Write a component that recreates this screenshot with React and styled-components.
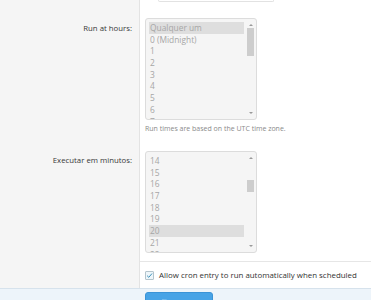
import React from 'react'
import styled, { createGlobalStyle } from 'styled-components'
import { Save } from 'lucide-react'

const ROW_H = 11.7

const hourOptions = ['Qualquer um', '0 (Midnight)', ...Array.from({ length: 23 }, (_, i) => String(i + 1))]
const minuteOptions = Array.from({ length: 60 }, (_, i) => String(i))

const GlobalStyle = createGlobalStyle`
  body {
    margin: 0;
    background: #fff;
    font-family: "Open Sans", "Noto Sans", sans-serif;
    color: #3c3c3c;
  }
`

function ListBox({ options, scrollIndex, selected }) {
	const visible = 8.5
	const trackH = 83
	const thumbH = Math.max(10, Math.round((visible / options.length) * trackH))
	const thumbTop = Math.round((scrollIndex / options.length) * trackH)
	const shown = options.slice(scrollIndex, scrollIndex + 9)

	return (
		<Box>
			<OptionList>
				{shown.map((opt) => (
					<Option key={opt} $selected={opt === selected}>
						{opt}
					</Option>
				))}
			</OptionList>
			<Scrollbar>
				<Arrow $up />
				<Track>
					<Thumb style={{ top: thumbTop, height: thumbH }} />
				</Track>
				<Arrow />
			</Scrollbar>
		</Box>
	)
}

export default function App() {
	return (
		<Page>
			<GlobalStyle />
			<Form>
				<Row>
					<Label />
					<Field $pad="0 0 8px">
						<PrevInput />
					</Field>
				</Row>

				<Row>
					<Label $top="13px">Run at hours:</Label>
					<Field $pad="8px 5px">
						<ListBox options={hourOptions} scrollIndex={0} selected="Qualquer um" />
						<Hint>Run times are based on the UTC time zone.</Hint>
					</Field>
				</Row>

				<Row>
					<Label $top="12px">Executar em minutos:</Label>
					<Field $pad="8px 5px">
						<ListBox options={minuteOptions} scrollIndex={14} selected="20" />
					</Field>
				</Row>

				<Row>
					<Label />
					<Field $pad="8px 5px" $separated>
						<CheckRow>
							<CheckBox>
								<svg width="7" height="7" viewBox="0 0 10 10">
									<path d="M1.5 5.2 L4 7.6 L8.6 2.2" fill="none" stroke="#3c8fb8" strokeWidth="1.4" />
								</svg>
							</CheckBox>
							Allow cron entry to run automatically when scheduled
						</CheckRow>
					</Field>
				</Row>
			</Form>

			<Footer>
				<Spacer />
				<SaveButton>
					<Save size={10} strokeWidth={2} />
					Salvar
				</SaveButton>
			</Footer>
		</Page>
	)
}

const Page = styled.div`
  width: 371px;
  height: 300px;
  overflow: hidden;
`

const Form = styled.div`
  display: flex;
  flex-direction: column;
`

const Row = styled.div`
  display: grid;
  grid-template-columns: 140px 1fr;
`

const Label = styled.div`
  background: #f5f5f5;
  border-right: 1px solid #e3e3e3;
  text-align: right;
  padding: ${(p) => p.$top || '0'} 7px 0 0;
  font-size: 7.8px;
  line-height: 10px;
  color: #383838;
`

const Field = styled.div`
  padding: ${(p) => p.$pad};
  border-top: ${(p) => (p.$separated ? '1px solid #e6e6e6' : 'none')};
`

const PrevInput = styled.div`
  margin-left: 18px;
  width: 114px;
  height: 1px;
  border: 1px solid #e2e2e2;
  border-top: none;
  border-radius: 0 0 5px 5px;
`

const Box = styled.div`
  display: flex;
  width: 110px;
  height: 100px;
  border: 1px solid #dcdcdc;
  border-radius: 3px;
  background: #f5f5f5;
  overflow: hidden;
`

const OptionList = styled.div`
  flex: 1;
  padding: 3px 2px 0 3px;
  overflow: hidden;
`

const Option = styled.div`
  height: ${ROW_H}px;
  line-height: ${ROW_H}px;
  padding-left: 1px;
  font-size: 8.4px;
  color: #a6a6a6;
  white-space: nowrap;
  background: ${(p) => (p.$selected ? '#dedede' : 'transparent')};
`

const Scrollbar = styled.div`
  width: 9px;
  display: flex;
  flex-direction: column;
  align-items: center;
  padding: 3px 1px 3px 0;
`

const Track = styled.div`
  position: relative;
  flex: 1;
  width: 7px;
`

const Thumb = styled.div`
  position: absolute;
  left: 0;
  width: 7px;
  background: #cdcdcd;
`

const Arrow = styled.div`
  width: 0;
  height: 0;
  margin: 2px 0;
  border-left: 2.5px solid transparent;
  border-right: 2.5px solid transparent;
  ${(p) => (p.$up ? 'border-bottom: 2.5px solid #9a9a9a;' : 'border-top: 2.5px solid #9a9a9a;')}
`

const Hint = styled.div`
  margin-top: 3px;
  font-size: 7px;
  line-height: 12px;
  color: #8a8a8a;
  white-space: nowrap;
`

const CheckRow = styled.label`
  display: flex;
  align-items: center;
  gap: 5px;
  height: 10px;
  font-size: 7.9px;
  color: #333;
  white-space: nowrap;
`

const CheckBox = styled.span`
  display: flex;
  align-items: center;
  justify-content: center;
  width: 7px;
  height: 7px;
  border: 1px solid #b4c4cc;
  border-radius: 1px;
  background: #eef6fa;
`

const Footer = styled.div`
  display: grid;
  grid-template-columns: 145px auto;
  align-items: start;
  height: 20px;
  padding-top: 3px;
  border-top: 1px solid #d6e2ec;
  background: #edf4fa;
`

const Spacer = styled.div``

const SaveButton = styled.button`
  display: flex;
  align-items: center;
  justify-content: center;
  gap: 5px;
  width: 68px;
  height: 24px;
  padding: 0;
  border: 1px solid #3b93d6;
  border-radius: 3px;
  background: #47a3e6;
  color: #fff;
  font-family: "Open Sans", sans-serif;
  font-size: 8px;
`
